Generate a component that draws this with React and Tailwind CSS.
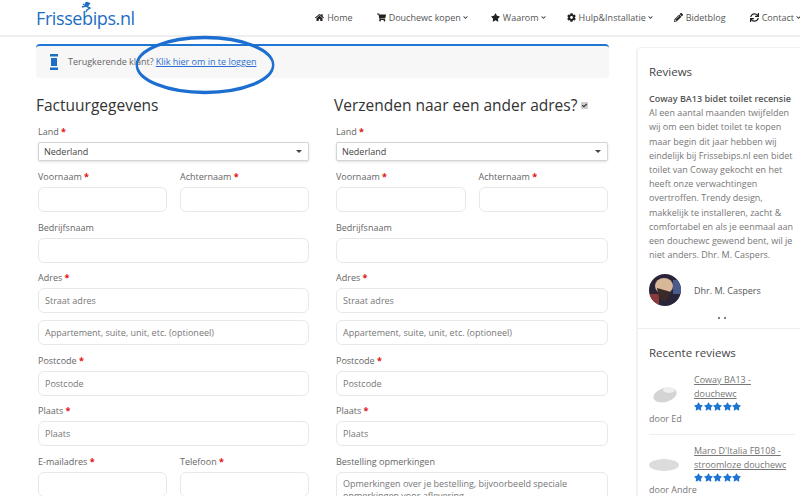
import { FaHome, FaShoppingCart, FaStar, FaCog, FaPencilAlt, FaSync, FaChevronDown, FaCheck } from 'react-icons/fa';

const navItems = [
  { icon: FaHome, label: 'Home', gap: 'mr-[24px]' },
  { icon: FaShoppingCart, label: 'Douchewc kopen', caret: true, gap: 'mr-[23px]' },
  { icon: FaStar, label: 'Waarom', caret: true, gap: 'mr-[21px]' },
  { icon: FaCog, label: 'Hulp&Installatie', caret: true, gap: 'mr-[21px]' },
  { icon: FaPencilAlt, label: 'Bidetblog', gap: 'mr-[24px]' },
  { icon: FaSync, label: 'Contact', caret: true, gap: '' },
];

const Req = () => <span className="text-[#e01010] font-bold"> *</span>;

const Label = ({ children, req }) => (
  <label className="mb-[1px] block h-[18px] text-[9px] leading-[18px] text-[#666]">
    {children}
    {req && <Req />}
  </label>
);

const Input = ({ placeholder, className = '' }) => (
  <div className={`h-[25px] rounded-[6px] border border-[#e8e8e8] bg-white px-[6px] text-[9px] leading-[23px] text-[#777] ${className}`}>
    {placeholder}
  </div>
);

const Field = ({ label, req, placeholder }) => (
  <div className="mb-[6.5px] min-w-0 flex-1">
    <Label req={req}>{label}</Label>
    <Input placeholder={placeholder} />
  </div>
);

const LandSelect = () => (
  <div className="mb-[7px]">
    <Label req>Land</Label>
    <div className="flex h-[19px] items-center justify-between rounded-[2px] border border-[#d5d5d5] bg-white px-[5px] text-[9px] text-[#444] shadow-sm">
      Nederland
      <span className="mr-[1px] h-0 w-0 border-x-[3px] border-t-[3px] border-x-transparent border-t-[#444]" />
    </div>
  </div>
);

const NameRow = () => (
  <div className="flex gap-[13px]">
    <Field label="Voornaam" req />
    <Field label="Achternaam" req />
  </div>
);

const AddressFields = () => (
  <>
    <Field label="Bedrijfsnaam" />
    <Field label="Adres" req placeholder="Straat adres" />
    <Input placeholder="Appartement, suite, unit, etc. (optioneel)" className="mb-[7px]" />
    <Field label="Postcode" req placeholder="Postcode" />
    <Field label="Plaats" req placeholder="Plaats" />
  </>
);

const Stars = () => (
  <div className="flex h-[11px] items-center gap-[0.5px]">
    {[0, 1, 2, 3, 4].map((i) => (
      <FaStar key={i} className="h-[9px] w-[9px] text-[#1f76d2]" />
    ))}
  </div>
);

const ProductShape = ({ flat }) => (
  <svg viewBox="0 0 32 24" className="h-[24px] w-[32px]">
    {flat ? (
      <ellipse cx="15" cy="13" rx="15" ry="6" fill="#dcdcdc" />
    ) : (
      <>
        <ellipse cx="16" cy="14" rx="12" ry="7" fill="#d4d4d4" transform="rotate(-15 16 14)" />
        <ellipse cx="20" cy="9" rx="6" ry="3" fill="#eeeeee" />
      </>
    )}
  </svg>
);

const ReviewItem = ({ title, line2, who, flat }) => (
  <div>
    <div className="flex">
      <div className="flex w-[45px] shrink-0 items-center">
        <ProductShape flat={flat} />
      </div>
      <div>
        <a className="block text-[9px] leading-[14px] text-[#777] underline">{title}</a>
        <a className="block text-[9px] leading-[14px] text-[#777] underline">{line2}</a>
        <Stars />
      </div>
    </div>
    <div className="text-[9px] leading-[13px] text-[#777]">{who}</div>
  </div>
);

export default function App() {
  return (
    <div className="relative h-[496px] w-[800px] overflow-hidden bg-white font-['Open_Sans',sans-serif]">
      <header className="flex h-[37px] items-center justify-between border-b-2 border-[#eeeeee] pl-[36px]">
        <div className="relative text-[18px] font-medium leading-none tracking-[-0.4px] text-[#1c6fc4]">
          Frissebips.nl
          <svg viewBox="0 0 12 12" className="absolute left-[44px] top-[-8px] h-[12px] w-[12px]">
            <circle cx="7" cy="3" r="2.2" fill="#1c6fc4" />
            <path d="M2 6 L6 5 L10 7 L7 9 L6 11 M3 3 L6 5 M10 2 L7 5" stroke="#1c6fc4" strokeWidth="1.4" fill="none" />
          </svg>
        </div>
        <nav className="-mr-[1px] flex items-center whitespace-nowrap text-[9px] text-[#555]">
          {navItems.map((item) => (
            <div key={item.label} className={`flex items-center ${item.gap}`}>
              <item.icon className="mr-[3px] h-[9px] w-[9px] text-[#222]" />
              {item.label}
              {item.caret && <FaChevronDown className="ml-[2px] h-[5px] w-[5px] text-[#222]" />}
            </div>
          ))}
        </nav>
      </header>

      <div className="flex pl-[36px] pt-[7px]">
        <main className="w-[573px] shrink-0">
          <div className="flex h-[34px] items-center rounded-[4px] border-t-2 border-[#1f76d2] bg-[#f7f7f7] pl-[13px] text-[9px] text-[#666]">
            <svg viewBox="0 0 10 16" className="mr-[9px] h-[16px] w-[10px]">
              <rect x="1" y="0" width="8" height="2.5" fill="#1c6fc4" />
              <rect x="2" y="4" width="6" height="8" fill="#1c6fc4" />
              <rect x="1" y="13.5" width="8" height="2.5" fill="#1c6fc4" />
            </svg>
            Terugkerende klant?
            <a className="ml-[2px] text-[#2a6fd0] underline">Klik hier om in te loggen</a>
          </div>

          <div className="mt-[15px] flex">
            <section className="ml-[2px] w-[271px] shrink-0">
              <h3 className="-ml-[2px] h-[30px] text-[15.5px] leading-[25px] text-[#333]">Factuurgegevens</h3>
              <LandSelect />
              <NameRow />
              <AddressFields />
              <div className="flex gap-[13px]">
                <Field label="E-mailadres" req />
                <Field label="Telefoon" req />
              </div>
            </section>

            <section className="ml-[27px] w-[272px] shrink-0">
              <h3 className="-ml-[2px] flex h-[30px] items-start whitespace-nowrap text-[15.5px] leading-[25px] text-[#333]">
                Verzenden naar een ander adres?
                <span className="ml-[4px] mt-[9px] flex h-[7px] w-[7px] items-center justify-center rounded-[1px] bg-[#ccc]">
                  <FaCheck className="h-[5px] w-[5px] text-[#222]" />
                </span>
              </h3>
              <LandSelect />
              <NameRow />
              <AddressFields />
              <Label>Bestelling opmerkingen</Label>
              <div className="h-[40px] rounded-[6px] border border-[#e8e8e8] px-[6px] pt-[5px] text-[9px] leading-[12.5px] text-[#777]">
                Opmerkingen over je bestelling, bijvoorbeeld speciale opmerkingen voor aflevering
              </div>
            </section>
          </div>
        </main>

        <aside className="ml-[27px] mt-[3px] h-[460px] w-[164px] shrink-0 rounded-tl-[5px] border-l-2 border-t border-[#f1f1f1]">
          <div className="h-[281px] border-b border-[#eeeeee] pl-[11px] pt-[14px]">
            <h4 className="text-[11.5px] leading-[20px] text-[#444]">Reviews</h4>
            <div className="mt-[10px] w-[147px] text-[9px] leading-[14.2px] text-[#777]">
              <strong className="font-semibold text-[#555]">Coway BA13 bidet toilet recensie</strong>
              <br />
              Al een aantal maanden twijfelden wij om een bidet toilet te kopen maar begin dit jaar hebben wij eindelijk bij Frissebips.nl een bidet toilet van Coway gekocht en het heeft onze verwachtingen overtroffen. Trendy design, makkelijk te installeren, zacht &amp; comfortabel en als je eenmaal aan een douchewc gewend bent, wil je niet anders. Dhr. M. Caspers.
            </div>
            <div className="mt-[12px] flex items-center">
              <svg viewBox="0 0 32 32" className="h-[32px] w-[32px]">
                <defs>
                  <clipPath id="avatar"><circle cx="16" cy="16" r="16" /></clipPath>
                </defs>
                <g clipPath="url(#avatar)">
                  <rect width="32" height="32" fill="#2a2438" />
                  <rect x="0" y="20" width="10" height="12" fill="#8a3a3a" />
                  <rect x="24" y="6" width="8" height="14" fill="#4a5a8a" />
                  <ellipse cx="15" cy="12" rx="9" ry="8" fill="#d8b898" />
                  <path d="M8 14 L22 18 L16 28 L10 24 Z" fill="#3a2a28" />
                </g>
              </svg>
              <span className="ml-[13px] text-[9px] text-[#555]">Dhr. M. Caspers</span>
            </div>
            <div className="mt-[11px] flex justify-center gap-[4px] pr-[5px]">
              <span className="h-[2px] w-[2px] rounded-full bg-[#556]" />
              <span className="h-[2px] w-[2px] rounded-full bg-[#556]" />
            </div>
          </div>

          <div className="pl-[11px] pr-[5px] pt-[14px]">
            <h4 className="text-[11.5px] leading-[20px] text-[#444]">Recente reviews</h4>
            <div className="mt-[10px]">
              <ReviewItem title="Coway BA13 -" line2="douchewc" who="door Ed" />
            </div>
            <div className="my-[9px] border-t border-[#eeeeee]" />
            <ReviewItem title="Maro D'Italia FB108 -" line2="stroomloze douchewc" who="door Andre" flat />
          </div>
        </aside>
      </div>

      <svg viewBox="0 0 230 70" className="absolute left-[135px] top-[35px] h-[60px] w-[140px]" preserveAspectRatio="none">
        <ellipse cx="115" cy="35" rx="112" ry="32" fill="none" stroke="#1c6fd0" strokeWidth="4" />
      </svg>
    </div>
  );
}
